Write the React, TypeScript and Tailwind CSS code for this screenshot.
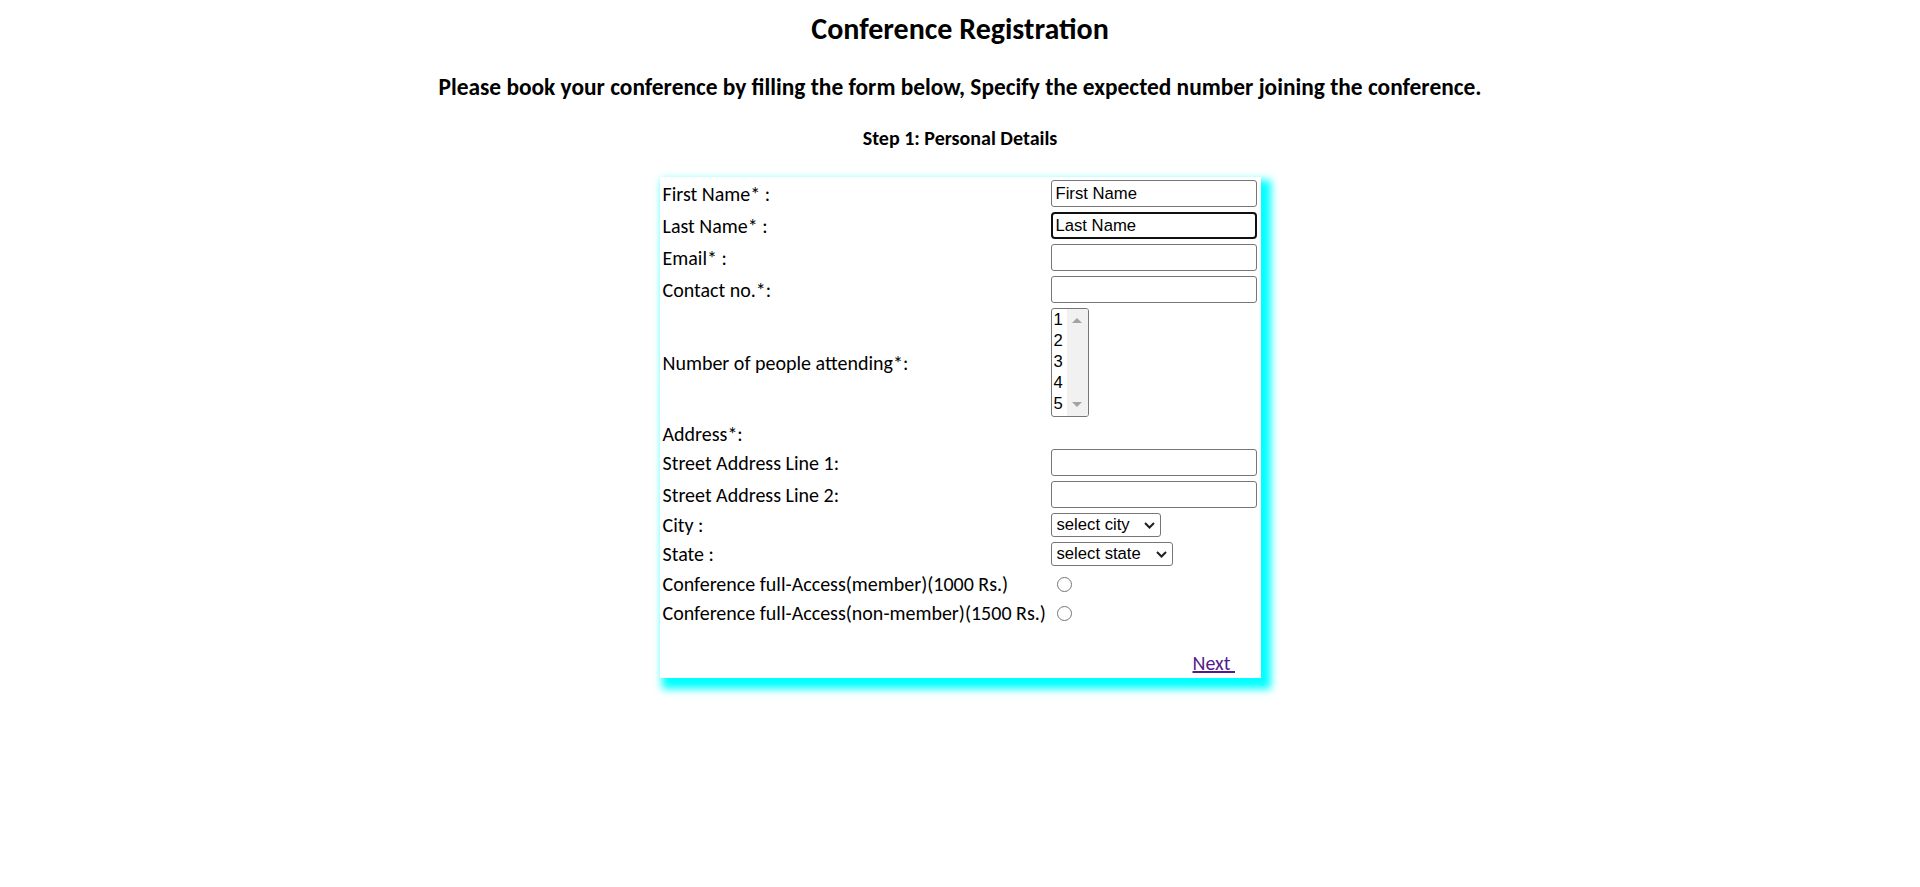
import { useState } from "react";

const labelCls = "text-[20px] leading-[24px] whitespace-nowrap";
const inputCls =
  "w-[206px] h-[27px] border border-[#767676] rounded-[3px] bg-white px-[4px] text-[16.67px] font-['Liberation_Sans',Arial,sans-serif] text-black outline-none";

const Row = ({ h, label, children }: { h: string; label?: string; children?: React.ReactNode }) => (
  <div className={`grid grid-cols-[388px_206px] items-center ${h}`}>
    <div className={labelCls}>{label}</div>
    <div className="flex items-center">{children}</div>
  </div>
);

const Select = ({ w, text }: { w: string; text: string }) => (
  <div className={`relative ${w} h-[24px]`}>
    <select className="appearance-none w-full h-full border border-[#767676] rounded-[3px] bg-white pl-[5px] text-[16.67px] leading-[20px] font-['Liberation_Sans',Arial,sans-serif] text-black outline-none">
      <option>{text}</option>
    </select>
    <svg className="absolute right-[6px] top-[9px] pointer-events-none" width="11" height="7" viewBox="0 0 11 7">
      <polyline points="1,1 5.5,5.5 10,1" fill="none" stroke="#1f1f1f" strokeWidth="2" />
    </svg>
  </div>
);

const App = () => {
  const [plan, setPlan] = useState<string>("");

  return (
    <div className="min-h-screen w-full bg-white text-black font-[Carlito,Lato,sans-serif]">
      <h2 className="pt-[11px] text-center text-[30px] leading-[36px] font-bold">Conference Registration</h2>
      <h3 className="mt-[26px] text-center text-[23.4px] leading-[28px] font-bold">
        Please book your conference by filling the form below, Specify the expected number joining the conference.
      </h3>
      <h4 className="mt-[25px] text-center text-[20px] leading-[24px] font-bold">Step 1: Personal Details</h4>

      <form
        className="mx-auto mt-[27px] w-[601px] h-[501px] bg-white shadow-[6px_7px_8px_4px_#00ffff] pt-[3px] pl-[3px]"
        onSubmit={(e) => e.preventDefault()}
      >
        <div className="flex flex-col gap-[5px]">
          <Row h="h-[27px]" label="First Name* :">
            <input className={inputCls} defaultValue="First Name" />
          </Row>
          <Row h="h-[27px]" label="Last Name* :">
            <input
              className="w-[206px] h-[27px] border-2 border-[#101010] rounded-[4px] bg-white px-[3px] text-[16.67px] font-['Liberation_Sans',Arial,sans-serif] text-black outline-none"
              defaultValue="Last Name"
            />
          </Row>
          <Row h="h-[27px]" label="Email* :">
            <input className={inputCls} type="email" />
          </Row>
          <Row h="h-[27px]" label="Contact no.*:">
            <input className={inputCls} />
          </Row>
          <Row h="h-[109px]" label="Number of people attending*:">
            <div className="flex w-[38px] h-[109px] border border-[#767676] rounded-[3px] overflow-hidden bg-white">
              <div className="w-[15px] flex flex-col pl-[2px] text-[16.67px] leading-[21px] font-['Liberation_Sans',Arial,sans-serif]">
                {[1, 2, 3, 4, 5].map((n) => (
                  <span key={n}>{n}</span>
                ))}
              </div>
              <div className="w-[21px] bg-[#f1f1f1] flex flex-col justify-between items-center py-[9px]">
                <svg width="10" height="5" viewBox="0 0 10 5">
                  <polygon points="0,5 5,0 10,5" fill="#a3a3a3" />
                </svg>
                <svg width="10" height="5" viewBox="0 0 10 5">
                  <polygon points="0,0 10,0 5,5" fill="#a3a3a3" />
                </svg>
              </div>
            </div>
          </Row>
          <Row h="h-[22px]" label="Address*:" />
          <Row h="h-[27px]" label="Street Address Line 1:">
            <input className={inputCls} />
          </Row>
          <Row h="h-[27px]" label="Street Address Line 2:">
            <input className={inputCls} />
          </Row>
          <Row h="h-[24px]" label="City :">
            <Select w="w-[110px]" text="select city" />
          </Row>
          <Row h="h-[24px]" label="State :">
            <Select w="w-[122px]" text="select state" />
          </Row>
          <Row h="h-[25px]" label="Conference full-Access(member)(1000 Rs.)">
            <input
              type="radio"
              name="plan"
              checked={plan === "member"}
              onChange={() => setPlan("member")}
              className="w-[15px] h-[15px] m-0 ml-[6px] mt-[2px]"
            />
          </Row>
          <Row h="h-[24px]" label="Conference full-Access(non-member)(1500 Rs.)">
            <input
              type="radio"
              name="plan"
              checked={plan === "nonmember"}
              onChange={() => setPlan("nonmember")}
              className="w-[15px] h-[15px] m-0 ml-[6px]"
            />
          </Row>
        </div>
        <div className="grid grid-cols-[388px_206px] mt-[26px] h-[24px] items-center">
          <div />
          <a href="#" className="ml-[142px] text-[20px] leading-[24px] text-[#551a8b] underline w-fit">
            Next&nbsp;
          </a>
        </div>
      </form>
    </div>
  );
};

export default App;
